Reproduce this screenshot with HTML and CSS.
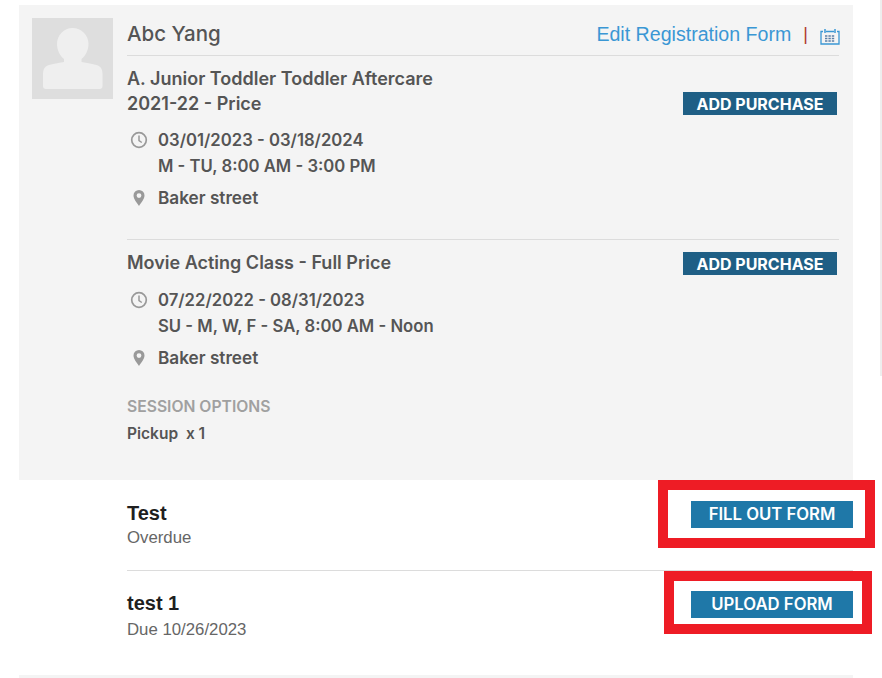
FILE: index.html
```html
<!DOCTYPE html>
<html lang="en">
<head>
<meta charset="utf-8">
<title>Registration</title>
<link rel="stylesheet" href="styles.css">
</head>
<body>
<div class="scroll-edge"></div>
<main class="page">
  <section class="card">
    <div class="avatar">
      <svg viewBox="0 0 81 81" width="81" height="81"><path class="avatar-shape" d="M40.500 10c9 0 16 7 16 16 0 6-3 12-7 15v3c6 1 11 2 15 3 4 1 6 4 6 9v12c0 2-1 3-3 3H14c-2 0-3-1-3-3V56c0-5 2-8 6-9 4-1 9-2 15-3v-3c-4-3-7-9-7-15 0-9 7-16 15.500-16z"/></svg>
    </div>
    <div class="details">
      <header class="student">
        <h2 class="student-name">Abc Yang</h2>
        <div class="student-actions">
          <a class="edit-link">Edit Registration Form</a>
          <span class="divider">|</span>
          <svg class="cal" viewBox="0 0 20 17" width="20" height="17"><path d="M3 3.500H1v12.500h18V3.500h-2M6 3.500h8" fill="none" stroke="#3a97d4" stroke-width="1.300"/><path d="M5 1v4M15 1v4" stroke="#3a97d4" stroke-width="1.500"/><path d="M5 8h10M5 10.500h10M5 13h10" stroke="#5b7fa6" stroke-width="1.300" stroke-dasharray="2.400 1"/></svg>
        </div>
      </header>
      <article class="enroll first">
        <div class="enroll-head">
          <h3 class="class-name">A. Junior Toddler Toddler Aftercare<br>2021-22 - Price</h3>
          <button class="purchase low">ADD PURCHASE</button>
        </div>
        <div class="meta when">
          <svg class="ico" viewBox="0 0 18 18" width="18" height="18"><circle cx="9" cy="9" r="7.300" fill="none" stroke="#999" stroke-width="1.700"/><path d="M9 4.500V9.500l2.800 2" fill="none" stroke="#999" stroke-width="1.500"/></svg>
          <p>03/01/2023 - 03/18/2024<br>M - TU, 8:00 AM - 3:00 PM</p>
        </div>
        <div class="meta where">
          <svg class="ico" viewBox="0 0 18 18" width="18" height="18"><path fill-rule="evenodd" fill="#999" d="M9 1a5.500 5.500 0 0 0-5.500 5.500C3.500 10 7 14 9 17c2-3 5.500-7 5.500-10.500A5.500 5.500 0 0 0 9 1zm0 3.200a2.400 2.400 0 1 1 0 4.800 2.400 2.400 0 0 1 0-4.800z"/></svg>
          <p class="place">Baker street</p>
        </div>
      </article>
      <article class="enroll second">
        <div class="enroll-head">
          <h3 class="class-name">Movie Acting Class - Full Price</h3>
          <button class="purchase">ADD PURCHASE</button>
        </div>
        <div class="meta when">
          <svg class="ico" viewBox="0 0 18 18" width="18" height="18"><circle cx="9" cy="9" r="7.300" fill="none" stroke="#999" stroke-width="1.700"/><path d="M9 4.500V9.500l2.800 2" fill="none" stroke="#999" stroke-width="1.500"/></svg>
          <p>07/22/2022 - 08/31/2023<br>SU - M, W, F - SA, 8:00 AM - Noon</p>
        </div>
        <div class="meta where">
          <svg class="ico" viewBox="0 0 18 18" width="18" height="18"><path fill-rule="evenodd" fill="#999" d="M9 1a5.500 5.500 0 0 0-5.500 5.500C3.500 10 7 14 9 17c2-3 5.500-7 5.500-10.500A5.500 5.500 0 0 0 9 1zm0 3.200a2.400 2.400 0 1 1 0 4.800 2.400 2.400 0 0 1 0-4.800z"/></svg>
          <p class="place">Baker street</p>
        </div>
        <h4 class="options-title">SESSION OPTIONS</h4>
        <p class="option">Pickup&nbsp; x 1</p>
      </article>
    </div>
  </section>
  <section class="forms">
    <div class="form-row">
      <div>
        <h3 class="form-name">Test</h3>
        <p class="form-status">Overdue</p>
      </div>
      <span class="callout callout-fill"></span>
      <button class="form-btn">FILL OUT FORM</button>
    </div>
    <div class="form-row">
      <div>
        <h3 class="form-name">test 1</h3>
        <p class="form-status">Due 10/26/2023</p>
      </div>
      <span class="callout callout-upload"></span>
      <button class="form-btn">UPLOAD FORM</button>
    </div>
  </section>
  <div class="foot-line"></div>
</main>
</body>
</html>
```

FILE: styles.css
```css
* { box-sizing: border-box; }
html, body { margin: 0; padding: 0; background: #fff; height: 678px; overflow: hidden; }
body { font-family: "Inter", "Open Sans", sans-serif; color: #555; position: relative; }
h2, h3, h4, p { margin: 0; }
.page { width: 834px; margin-left: 19px; padding-top: 5px; }
.scroll-edge { position: absolute; left: 880px; top: 0; width: 2px; height: 376px; background: #eeeeee; }

.card { background: #f4f4f4; height: 475px; padding: 13px 14px 0 13px; display: flex; gap: 14px; }
.avatar { width: 81px; height: 81px; background: #dedede; flex: none; }
.avatar svg { display: block; }
.avatar-shape { fill: #efefef; }
.details { flex: 1; }

.student { height: 38px; display: flex; justify-content: space-between; align-items: flex-start; border-bottom: 1px solid #dcdcdc; }
.student-name { font-size: 20.500px; font-weight: 500; line-height: 32px; color: #555; }
.student-actions { display: flex; align-items: center; height: 32px; }
.edit-link { font-family: "Liberation Sans", Arial, sans-serif; font-size: 19.600px; color: #3a97d4; }
.divider { font-family: "Liberation Sans", Arial, sans-serif; font-size: 18px; color: #b03a30; margin: 0 12px 0 12px; }
.cal { display: block; margin: 4px -1px 0 0; }

.enroll-head { display: flex; justify-content: space-between; align-items: flex-start; }
.class-name { font-size: 18px; line-height: 25px; font-weight: 600; color: #555; }
.purchase { font-family: "Inter", sans-serif; font-weight: 700; font-size: 16px; color: #fff; background: #1f5f85; border: 0; padding: 0; width: 154px; height: 23px; margin-right: 2px; }
.purchase.low { margin-top: 26px; }
.first { padding-top: 10px; height: 184px; border-bottom: 1px solid #dcdcdc; }
.second { padding-top: 10px; }
.second .purchase { margin-top: 2px; }

.meta { display: flex; gap: 10px; margin-left: 3px; }
.meta p { font-size: 16.700px; font-weight: 600; line-height: 26px; color: #555; }
.meta .place { font-size: 17.200px; }
.ico { flex: none; margin-top: 4px; }
.when { margin-top: 11px; }
.where { margin-top: 6px; }
.second .when { margin-top: 12px; }

.options-title { font-size: 15.700px; font-weight: 600; color: #a0a0a0; line-height: 20px; margin-top: 26px; }
.option { font-size: 15.500px; font-weight: 600; color: #555; line-height: 20px; margin-top: 7px; }

.forms { padding-left: 108px; }
.form-row { position: relative; height: 91px; display: flex; justify-content: space-between; align-items: flex-start; padding-top: 21px; }
.form-row:first-child { border-bottom: 1px solid #dcdcdc; }
.form-row:last-child { padding-top: 20px; height: 104px; }
.form-row:last-child .form-status { margin-top: 2px; }
.form-name { font-family: "Liberation Sans", Arial, sans-serif; font-size: 20px; font-weight: 700; color: #1f1f1f; line-height: 24px; }
.form-status { font-family: "Liberation Sans", Arial, sans-serif; font-size: 16.800px; color: #666; line-height: 25px; }
.form-btn { font-family: "Inter", sans-serif; font-weight: 600; font-size: 16.700px; color: #fff; background: #1f78a8; border: 0; padding: 0 0 2px; width: 162px; height: 27px; }
.callout { position: absolute; border: 10px solid #ee1c25; }
.callout-fill { left: 531px; top: 0; width: 217px; height: 68px; }
.callout-upload { left: 537px; top: 0; width: 208px; height: 63px; }
.foot-line { height: 3px; background: #f4f4f4; }
```
